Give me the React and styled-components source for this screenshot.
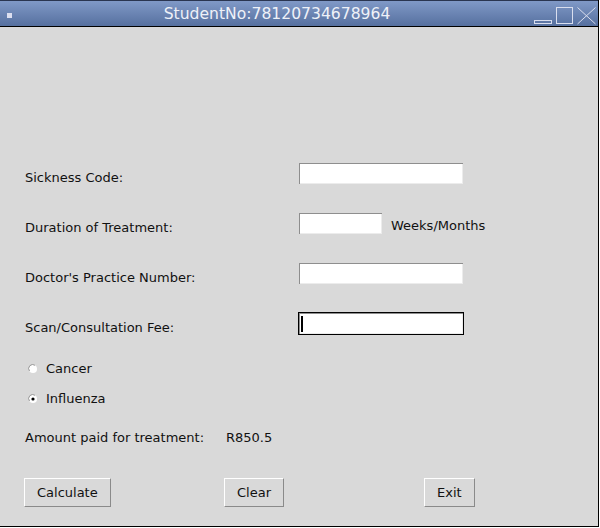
import styled, { createGlobalStyle } from "styled-components";

const GlobalStyle = createGlobalStyle`
  html, body {
    margin: 0;
    padding: 0;
    background: #ffffff;
  }
  body {
    font-family: "DejaVu Sans", "Liberation Sans", sans-serif;
  }
`;

export default function App() {
  return (
    <>
      <GlobalStyle />
      <Window>
        <TitleBar>
          <MenuBox>
            <MenuDot />
          </MenuBox>
          <Title>StudentNo:78120734678964</Title>
          <Controls>
            <svg width="63" height="26" viewBox="0 0 63 26">
              <g fill="none" stroke="#d9deee" strokeWidth="1">
                <rect x="0.5" y="19.5" width="17" height="3" />
                <rect x="22.5" y="6.5" width="16" height="16" />
                <path d="M43.5 6.5 L61.5 23 M61.5 6.5 L43.5 23" />
              </g>
            </svg>
          </Controls>
        </TitleBar>

        <Content>
          <Fields>
            <FieldRow>
              <Label>Sickness Code:</Label>
              <Entry $width={164} />
            </FieldRow>
            <FieldRow>
              <Label>Duration of Treatment:</Label>
              <Entry $width={83} />
              <Unit>Weeks/Months</Unit>
            </FieldRow>
            <FieldRow>
              <Label>Doctor's Practice Number:</Label>
              <Entry $width={164} />
            </FieldRow>
            <FieldRow>
              <Label>Scan/Consultation Fee:</Label>
              <Entry $width={164} $focused>
                <Caret />
              </Entry>
            </FieldRow>
          </Fields>

          <Radios>
            <RadioRow>
              <RadioMark checked={false} />
              <span>Cancer</span>
            </RadioRow>
            <RadioRow>
              <RadioMark checked />
              <span>Influenza</span>
            </RadioRow>
          </Radios>

          <AmountRow>
            <span>Amount paid for treatment:</span>
            <span>R850.5</span>
          </AmountRow>

          <ButtonRow>
            <Button>Calculate</Button>
            <Button>Clear</Button>
            <Button>Exit</Button>
          </ButtonRow>
        </Content>
      </Window>
    </>
  );
}

function RadioMark({ checked }) {
  return (
    <svg width="10" height="10" viewBox="0 0 10 10">
      <circle cx="5" cy="5" r="4" fill="#ffffff" />
      <path d="M1.5 7 A4 4 0 0 1 7 1.3" fill="none" stroke="#9a9a9a" strokeWidth="1" />
      {checked && <circle cx="5" cy="5" r="1.6" fill="#000000" />}
    </svg>
  );
}

const Window = styled.div`
  box-sizing: border-box;
  width: 599px;
  height: 527px;
  border-right: 1px solid #000;
  border-bottom: 1px solid #000;
  background: #d9d9d9;
  display: flex;
  flex-direction: column;
`;

const TitleBar = styled.div`
  box-sizing: border-box;
  height: 27px;
  border-top: 1px solid #2a3550;
  border-bottom: 1px solid #000;
  background: linear-gradient(#8099c7, #56709f);
  display: flex;
  align-items: center;
`;

const MenuBox = styled.div`
  width: 20px;
  padding-left: 7px;
  box-sizing: border-box;
  display: flex;
  align-items: center;
`;

const MenuDot = styled.div`
  width: 5px;
  height: 5px;
  background: #dcdff0;
  margin-top: 3px;
`;

const Title = styled.div`
  flex: 1;
  text-align: center;
  color: #eef1f8;
  font-size: 15.6px;
  line-height: 18px;
`;

const Controls = styled.div`
  width: 64px;
  height: 25px;
  display: flex;
  svg {
    display: block;
  }
`;

const Content = styled.div`
  flex: 1;
  display: flex;
  flex-direction: column;
  padding-top: 135px;
  font-size: 13px;
  line-height: 16px;
  color: #111;
`;

const Fields = styled.div`
  display: flex;
  flex-direction: column;
  gap: 27px;
`;

const FieldRow = styled.div`
  display: grid;
  grid-template-columns: 273px auto auto;
  grid-template-rows: 23px;
  justify-content: start;
  align-items: start;
  height: 23px;
  padding-left: 25px;
`;

const Label = styled.span`
  margin-top: 8px;
`;

const Unit = styled.span`
  margin-left: 8px;
  margin-top: 6px;
`;

const Entry = styled.div`
  box-sizing: border-box;
  width: ${(p) => p.$width + 2}px;
  height: 23px;
  border: 1px solid ${(p) => (p.$focused ? "#000" : "#d9d9d9")};
  background: #fff;
  box-shadow: inset 1px 1px 0 #8e8e8e, inset -1px -1px 0 #ececec;
  display: flex;
  align-items: center;
  padding-left: 2px;
`;

const Caret = styled.div`
  width: 2px;
  height: 16px;
  background: #000;
`;

const Radios = styled.div`
  display: flex;
  flex-direction: column;
  gap: 10px;
  margin-top: 24px;
`;

const RadioRow = styled.div`
  display: flex;
  align-items: center;
  gap: 8px;
  height: 20px;
  padding-left: 28px;
  svg {
    display: block;
  }
`;

const AmountRow = styled.div`
  display: grid;
  grid-template-columns: 201px auto;
  justify-content: start;
  align-items: center;
  height: 20px;
  padding-left: 25px;
  margin-top: 19px;
`;

const ButtonRow = styled.div`
  display: grid;
  grid-template-columns: 200px 200px auto;
  justify-content: start;
  align-items: start;
  padding-left: 24px;
  margin-top: 30px;
`;

const Button = styled.button`
  justify-self: start;
  box-sizing: border-box;
  height: 29px;
  padding: 0 12px;
  border: 1px solid;
  border-color: #ffffff #8a8a8a #8a8a8a #ffffff;
  background: #d9d9d9;
  font-family: "DejaVu Sans", "Liberation Sans", sans-serif;
  font-size: 13px;
  color: #111;
`;
